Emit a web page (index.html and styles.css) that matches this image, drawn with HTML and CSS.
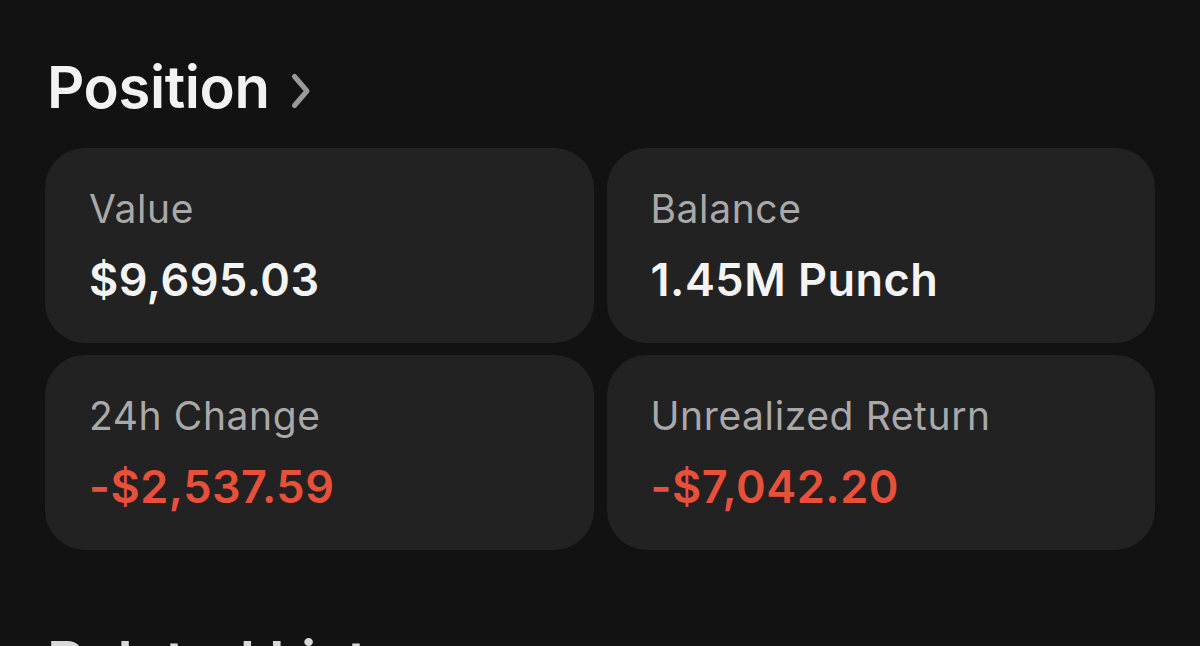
FILE: index.html
```html
<!DOCTYPE html>
<html>
<head>
    <meta charset="UTF-8">
    <title>Position</title>
    <link rel="stylesheet" href="styles.css">
</head>
<body>

<div class="page">
    <h2 class="section-title">
        Position
        <svg class="chevron" width="22" height="38" viewBox="0 0 22 38"><path d="M4.5 4.5 L17 19 L4.5 33.5" fill="none" stroke="#9a9a9a" stroke-width="5" stroke-linecap="round" stroke-linejoin="round"/></svg>
    </h2>
    <div class="stats">
        <div class="card">
            <div class="label">Value</div>
            <div class="amount">$9,695.03</div>
        </div>
        <div class="card">
            <div class="label">Balance</div>
            <div class="amount">1.45M Punch</div>
        </div>
        <div class="card">
            <div class="label">24h Change</div>
            <div class="amount neg">-$2,537.59</div>
        </div>
        <div class="card">
            <div class="label">Unrealized Return</div>
            <div class="amount neg">-$7,042.20</div>
        </div>
    </div>
    <h2 class="section-title next">Related Lists</h2>
</div>

</body>
</html>
```

FILE: styles.css
```css
* { margin: 0; padding: 0; box-sizing: border-box;}
html, body { background: #121212; height: 100%; overflow: hidden;}
body { font-family: Inter, "Noto Sans", sans-serif; color: #f2f2f2;}
.page { padding: 46px 45px 0 45px;}
.section-title { display: flex; align-items: center; gap: 20px; font-size: 58px; font-weight: 600; line-height: 82px; padding-left: 2px; letter-spacing: -0.4px;}
.chevron { margin-top: 7px;}
.stats { display: grid; grid-template-columns: 1fr 1fr; gap: 12px 13px; margin-top: 20px;}
.card { background: #222222; border-radius: 40px; height: 195px; padding: 37px 44px 0 44px;}
.label { font-size: 39px; line-height: 48px; color: #a9a9a9; font-weight: 400; letter-spacing: 0.6px;}
.amount { font-size: 45px; line-height: 56px; font-weight: 600; margin-top: 19px; color: #f4f4f4; letter-spacing: 0.5px;}
.amount.neg { color: #e9503a;}
.next { margin-top: 71px; color: #d8d8d8;}
```
